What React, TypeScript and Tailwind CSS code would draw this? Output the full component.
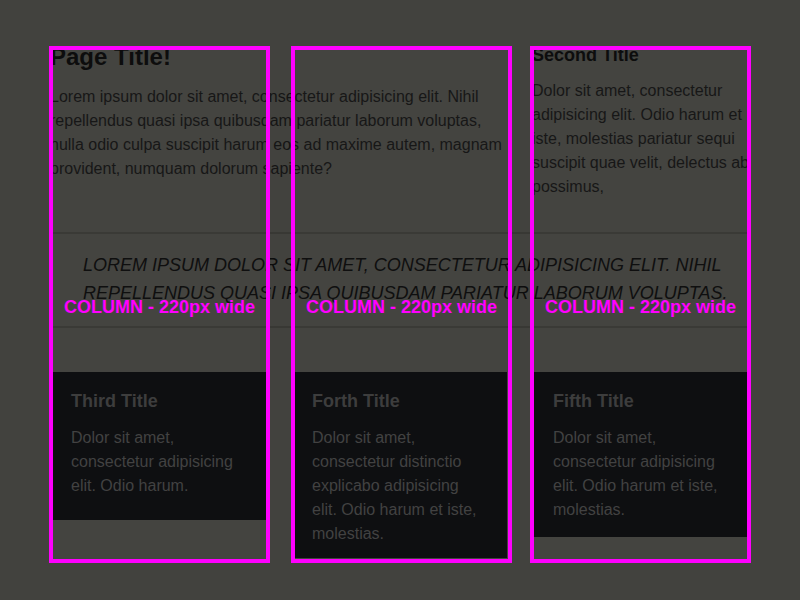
const columns = [
  { left: "left-[49px]" },
  { left: "left-[291px]" },
  { left: "left-[530px]" },
];

const cards = [
  {
    title: "Third Title",
    body: "Dolor sit amet, consectetur adipisicing elit. Odio harum.",
    height: "h-[148px]",
  },
  {
    title: "Forth Title",
    body: "Dolor sit amet, consectetur distinctio explicabo adipisicing elit. Odio harum et iste, molestias.",
    height: "h-[186px]",
  },
  {
    title: "Fifth Title",
    body: "Dolor sit amet, consectetur adipisicing elit. Odio harum et iste, molestias.",
    height: "h-[165px]",
  },
];

function GridOverlay() {
  return (
    <div className="pointer-events-none absolute inset-0">
      {columns.map((c, i) => (
        <div
          key={i}
          className={`absolute top-[46px] h-[517px] w-[221px] border-4 border-[#ff00ff] bg-white/[0.012] ${c.left}`}
        >
          <div className="absolute left-[-4px] right-[-4px] top-[245px] text-center text-[18px] font-bold leading-[24px] text-[#ff00ff]">
            COLUMN - 220px wide
          </div>
        </div>
      ))}
    </div>
  );
}

export default function App() {
  return (
    <div className="relative h-[600px] w-full overflow-hidden bg-[#42423e] font-['Liberation_Sans',Arial,sans-serif]">
      <div className="mx-auto w-[700px] pt-[43px]">
        <div className="flex items-start gap-[22px]">
          <main className="w-[460px] text-[#151515]">
            <h1 className="text-[24px] font-bold leading-[28px] text-[#0b0b0b]">Page Title!</h1>
            <p className="mt-[14px] text-[16px] leading-[24px]">
              Lorem ipsum dolor sit amet, consectetur adipisicing elit. Nihil repellendus quasi ipsa
              quibusdam pariatur laborum voluptas, nulla odio culpa suscipit harum eos ad maxime autem,
              magnam provident, numquam dolorum sapiente?
            </p>
          </main>
          <aside className="w-[218px] text-[#151515]">
            <h2 className="text-[18px] font-bold leading-[24px] text-[#0b0b0b]">Second Title</h2>
            <p className="mt-[12px] text-[16px] leading-[24px]">
              Dolor sit amet, consectetur adipisicing elit. Odio harum et iste, molestias pariatur sequi
              suscipit quae velit, delectus ab possimus,
            </p>
          </aside>
        </div>

        <blockquote className="mt-[33px] border-y-2 border-[#383834] pb-[19px] pl-[33px] pr-[18px] pt-[17px] text-[18px] italic uppercase leading-[28px] text-[#0d0d0d]">
          Lorem ipsum dolor sit amet, consectetur adipisicing elit. Nihil repellendus quasi ipsa
          quibusdam pariatur laborum voluptas.
        </blockquote>

        <div className="mt-[44px] flex w-[698px] items-start gap-[25px]">
          {cards.map((card) => (
            <div key={card.title} className={`w-[216px] bg-[#0c0d0f] px-[21px] pt-[17px] ${card.height}`}>
              <h3 className="text-[18px] font-bold leading-[24px] text-[#3b3b3b]">{card.title}</h3>
              <p className="mt-[13px] text-[16px] leading-[24px] text-[#404040]">{card.body}</p>
            </div>
          ))}
        </div>
      </div>
      <GridOverlay />
    </div>
  );
}
